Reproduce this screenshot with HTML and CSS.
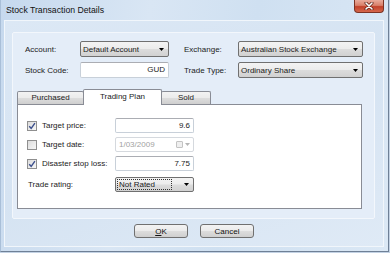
FILE: index.html
```html
<!DOCTYPE html>
<html lang="en">
<head>
    <meta charset="UTF-8">
    <title>Stock Transaction Details</title>
    <link rel="stylesheet" href="styles.css">
</head>
<body>
    <div class="window">
        <div class="titlebar">
            <span class="title">Stock Transaction Details</span>
            <span class="close">
                <svg width="10" height="8" viewBox="0 0 10 8">
                    <path d="M2 1 L8 7 M8 1 L2 7" stroke="#5a1e14" stroke-width="3" stroke-linecap="round"/>
                    <path d="M2 1 L8 7 M8 1 L2 7" stroke="#fff" stroke-width="1.6" stroke-linecap="round"/>
                </svg>
            </span>
        </div>

        <div class="client">
            <div class="panel">
                <!-- account / exchange header -->
                <div class="header-grid">
                    <span class="lbl">Account:</span>
                    <div class="combo"><span class="val">Default Account</span><span class="arrow"><svg width="5" height="3" viewBox="0 0 5 3"><path d="M0 0 H5 L2.5 3 Z" fill="#000"/></svg></span></div>
                    <span></span>
                    <span class="lbl">Exchange:</span>
                    <div class="combo"><span class="val">Australian Stock Exchange</span><span class="arrow"><svg width="5" height="3" viewBox="0 0 5 3"><path d="M0 0 H5 L2.5 3 Z" fill="#000"/></svg></span></div>

                    <span class="lbl">Stock Code:</span>
                    <div class="textbox">GUD</div>
                    <span></span>
                    <span class="lbl">Trade Type:</span>
                    <div class="combo"><span class="val">Ordinary Share</span><span class="arrow"><svg width="5" height="3" viewBox="0 0 5 3"><path d="M0 0 H5 L2.5 3 Z" fill="#000"/></svg></span></div>
                </div>

                <div class="tabs">
                    <div class="tab">Purchased</div>
                    <div class="tab active">Trading Plan</div>
                    <div class="tab">Sold</div>
                </div>

                <div class="tab-page">
                    <div class="plan-row">
                        <label class="check"><span class="box checked"><svg width="8" height="8" viewBox="0 0 8 8"><path d="M1.2 4.2 L3.2 6.3 L6.9 1.2" stroke="#3b4f8c" stroke-width="1.4" fill="none"/></svg></span>Target price:</label>
                        <div class="textbox">9.6</div>
                    </div>
                    <div class="plan-row">
                        <label class="check"><span class="box"></span>Target date:</label>
                        <div class="datebox"><span class="val">1/03/2009</span><span class="cal"><span class="cal-btn"></span><svg width="5" height="3" viewBox="0 0 5 3"><path d="M0 0 H5 L2.5 3 Z" fill="#b5b5b5"/></svg></span></div>
                    </div>
                    <div class="plan-row">
                        <label class="check"><span class="box checked"><svg width="8" height="8" viewBox="0 0 8 8"><path d="M1.2 4.2 L3.2 6.3 L6.9 1.2" stroke="#3b4f8c" stroke-width="1.4" fill="none"/></svg></span>Disaster stop loss:</label>
                        <div class="textbox">7.75</div>
                    </div>
                    <div class="plan-row rating">
                        <span class="lbl">Trade rating:</span>
                        <div class="combo focus"><span class="val">Not Rated</span><span class="arrow"><svg width="5" height="3" viewBox="0 0 5 3"><path d="M0 0 H5 L2.5 3 Z" fill="#000"/></svg></span></div>
                    </div>
                </div>
            </div>

            <div class="buttons">
                <button class="btn"><u>O</u>K</button>
                <button class="btn">Cancel</button>
            </div>
        </div>
    </div>
</body>
</html>
```

FILE: styles.css
```css
body {
    margin: 0;
    width: 390px;
    height: 253px;
    overflow: hidden;
    background-color: #c3d2e4;
    font-family: "Liberation Sans", Arial, sans-serif;
    font-size: 8px;
    color: #1b1b1b;
}
.window {
    box-sizing: border-box;
    width: 389px;
    height: 252px;
    border-left: 1px solid #a9bfd8;
    border-right: 1px solid #6f8096;
    border-bottom: 1px solid #6f8096;
    background: linear-gradient(100deg, #c6d9ee 0%, #d9e6f4 35%, #cfe0f1 60%, #dbe8f5 100%);
}
.titlebar {
    display: flex;
    justify-content: space-between;
    height: 20px;
    padding-left: 5px;
}
.title {
    font-size: 8.7px;
    line-height: 20px;
    color: #111;
}
.close {
    display: flex;
    align-items: center;
    justify-content: center;
    box-sizing: border-box;
    width: 30px;
    height: 13px;
    margin-right: 4px;
    border: 1px solid #7c3223;
    border-top: none;
    border-radius: 0 0 4px 4px;
    background: linear-gradient(#e9ab9c 0%, #d9806a 45%, #c2412a 55%, #d5674c 100%);
}
.client {
    box-sizing: border-box;
    height: 227px;
    margin: 0 4px 0 3px;
    border: 1px solid #f1f6fb;
    background: linear-gradient(160deg, #dce8f5 0%, #d5e3f2 50%, #dfeaf6 100%);
}
.panel {
    box-sizing: border-box;
    width: 363px;
    margin: 11px 0 0 7px;
    padding: 0 0 9px 4px;
    border: 1px solid #f3f7fc;
    border-radius: 2px;
    background-color: #e4edf8;
}
.header-grid {
    display: grid;
    grid-template-columns: 55px 89px 15px 54px 125px;
    grid-template-rows: 16px 16px;
    row-gap: 5px;
    padding: 8px 0 0 8px;
    align-items: center;
}
.lbl {
    white-space: nowrap;
}
.combo {
    box-sizing: border-box;
    display: flex;
    align-items: center;
    height: 16px;
    border: 1px solid #707070;
    border-radius: 2px;
    background: linear-gradient(#f3f3f3 0%, #ececec 48%, #dcdcdc 52%, #d1d1d1 100%);
}
.combo .val {
    flex: 1;
    padding-left: 2px;
    white-space: nowrap;
    overflow: hidden;
}
.combo .arrow {
    display: flex;
    width: 14px;
    justify-content: center;
}
.textbox {
    box-sizing: border-box;
    height: 16px;
    padding-right: 3px;
    border: 1px solid #c8d0d9;
    border-top-color: #abadb3;
    border-radius: 2px;
    background-color: #fff;
    text-align: right;
    line-height: 14px;
}
.tabs {
    display: flex;
    align-items: flex-end;
    height: 15px;
    margin-top: 11px;
}
.tab {
    box-sizing: border-box;
    height: 13px;
    border: 1px solid #898c95;
    border-bottom: none;
    border-radius: 2px 2px 0 0;
    background: linear-gradient(#f3f3f3 0%, #ebebeb 50%, #dddddd 51%, #cfcfcf 100%);
    text-align: center;
    line-height: 12px;
}
.tab:nth-child(1) {
    width: 67px;
}
.tab:nth-child(3) {
    width: 50px;
    margin-left: -1px;
}
.tab.active {
    position: relative;
    z-index: 1;
    width: 79px;
    height: 16px;
    margin: 0 0 -1px -1px;
    background: #fff;
    line-height: 14px;
}
.tab-page {
    box-sizing: border-box;
    display: flex;
    flex-direction: column;
    gap: 4px;
    width: 345px;
    height: 105px;
    padding-top: 13px;
    border: 1px solid #898c95;
    background-color: #fff;
}
.plan-row {
    display: grid;
    grid-template-columns: 97px 79px;
    height: 15px;
    align-items: center;
}
.plan-row .textbox {
    height: 15px;
    line-height: 13px;
}
.plan-row.rating {
    margin-top: 2px;
}
.plan-row.rating .lbl {
    padding-left: 10px;
}
.plan-row.rating .combo {
    height: 15px;
}
.check {
    display: flex;
    align-items: center;
    gap: 5px;
    padding-left: 9px;
    white-space: nowrap;
}
.box {
    box-sizing: border-box;
    display: flex;
    align-items: center;
    justify-content: center;
    width: 10px;
    height: 10px;
    border: 1px solid #8f8f8f;
    background: linear-gradient(135deg, #dcdcdc, #f6f6f6);
}
.datebox {
    box-sizing: border-box;
    display: flex;
    align-items: center;
    height: 15px;
    border: 1px solid #d5d9de;
    border-radius: 2px;
    color: #a2a2a2;
}
.datebox .val {
    flex: 1;
    padding-left: 3px;
}
.cal {
    display: flex;
    align-items: center;
    gap: 2px;
    padding-right: 3px;
}
.cal-btn {
    box-sizing: border-box;
    width: 7px;
    height: 7px;
    border: 1px solid #c3c3c3;
    border-radius: 1px;
    background-color: #efefef;
}
.combo.focus .val {
    margin: 1px 10px 1px 1px;
    padding-left: 1px;
    border: 1px dotted #333;
    line-height: 9px;
}
.combo.focus .arrow {
    width: 8px;
    margin-right: 3px;
}
.buttons {
    display: flex;
    justify-content: center;
    gap: 12px;
    margin-top: 5px;
}
.btn {
    box-sizing: border-box;
    width: 54px;
    height: 14px;
    padding: 0;
    border: 1px solid #707070;
    border-radius: 3px;
    background: linear-gradient(#f3f3f3 0%, #ebebeb 48%, #dddddd 52%, #cfcfcf 100%);
    font-family: "Liberation Sans", Arial, sans-serif;
    font-size: 8px;
    color: #111;
}
```
